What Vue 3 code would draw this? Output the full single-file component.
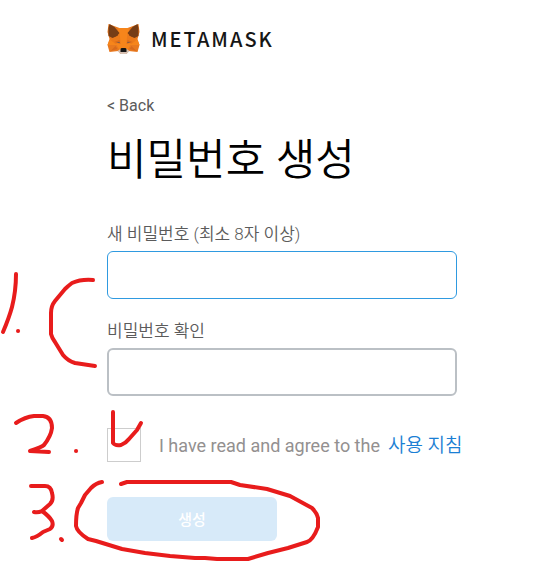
<script setup>
import { ref } from 'vue'

const password = ref('')
const confirmation = ref('')
const agreed = ref(false)

const strokes = [
  'M16 274Q16 291 12 307Q9 318 3 332',
  'M18 331h.1',
  'M93 280Q81 279 72 283Q68 286 65 289L55 301Q51 306 51 313V334Q52 338 55 342L63 355Q68 361 75 363L95 366',
  'M16 423Q25 417 34 416H43Q52 417 52 428Q51 436 44 445Q42 447 30 451L49 452',
  'M76 451h.1',
  'M113 412V443Q115 446 121 445Q126 443 129 439L137 430L141 423',
  'M31 486H45Q51 486 52 493Q54 500 50 504L42 511Q38 513 34 512M42 511Q49 516 52 521Q54 526 50 529L43 532Q37 537 32 538',
  'M61 539L62 540',
  'M102 482Q96 483 91 488L85 495L81 503L78 508Q76 514 76 526Q77 532 88 539L96 541L122 549L145 553L170 556L195 558H205L217 559H248L268 553L288 548L307 542Q313 540 318 527V518Q317 513 312 508L290 496L267 489L240 485L231 482H127L121 484'
]
</script>

<template>
  <main class="page">
    <header class="brand">
      <svg class="fox" viewBox="0 0 32 30" aria-hidden="true">
        <path fill="#e8791f" d="M1 0L12 4H20L31 0L32 8L30 15L32 21L30 28L21 27L19 30H13L11 27L2 28L0 21L2 15L0 8Z" />
        <path fill="#f6851b" d="M11 4H21L23 13L30 16L32 21H23L20 26H12L9 21H0L2 16L9 13Z" />
        <path fill="#763d16" d="M2 0L7 3L12 9L10 12L5 14L1 12L1 4ZM30 0L25 3L20 9L22 12L27 14L31 12L31 4Z" />
        <path fill="#ec7a1a" d="M12 9L13 18L8 20L3 16L10 12ZM20 9L19 18L24 20L29 16L22 12Z" />
        <path fill="#d86a1c" d="M7 18L12 16L13 20ZM25 18L20 16L19 20ZM3 27L10 25L8 22ZM29 27L22 25L24 22Z" />
        <path fill="#56585c" d="M9 18L12 18L12 19ZM23 18L20 18L20 19Z" />
        <path fill="#d7c1b3" d="M10 27L13 25H19L22 27L19 30H13Z" />
        <path fill="#161616" d="M14 24H18L19 25V28H13V25Z" />
      </svg>
      <span class="wordmark">METAMASK</span>
    </header>

    <a class="back" href="#">&lt; Back</a>
    <h1>비밀번호 생성</h1>

    <form @submit.prevent>
      <div class="field">
        <label for="password">새 비밀번호 (최소 8자 이상)</label>
        <input id="password" v-model="password" class="entry active" type="password">
      </div>
      <div class="field">
        <label for="confirmation">비밀번호 확인</label>
        <input id="confirmation" v-model="confirmation" class="entry" type="password">
      </div>
      <div class="terms">
        <input id="terms" v-model="agreed" type="checkbox">
        <p><label for="terms">I have read and agree to the</label><a href="#">사용 지침</a></p>
      </div>
      <button type="submit" disabled>생성</button>
    </form>

    <svg class="notes" width="541" height="574" viewBox="0 0 541 574" aria-hidden="true">
      <path v-for="stroke in strokes" :key="stroke" :d="stroke" />
    </svg>
  </main>
</template>

<style>
body {
  margin: 0;
  background: #fff;
}
</style>

<style scoped>
.page {
  position: relative;
  box-sizing: border-box;
  max-width: 541px;
  padding: 24px 72px 32px 107px;
  font-family: Roboto, "Noto Sans CJK KR", sans-serif;
  color: #5b5b5b;
}

.brand {
  display: flex;
  align-items: center;
  gap: 11px;
  height: 30px;
}

.fox {
  width: 33px;
  height: 30px;
}

.wordmark {
  font-family: "Noto Sans CJK KR", sans-serif;
  font-size: 20px;
  line-height: 28px;
  font-weight: 500;
  letter-spacing: 2px;
  color: #161616;
}

.back {
  display: block;
  width: max-content;
  margin-top: 40px;
  font-size: 16px;
  line-height: 24px;
  color: #5b5b5b;
  text-decoration: none;
}

h1 {
  margin: 12px 0 32px;
  font-size: 43px;
  line-height: 60px;
  font-weight: 350;
  color: #000;
  white-space: nowrap;
}

.field {
  display: flex;
  flex-direction: column;
  gap: 5px;
  max-width: 350px;
  margin-bottom: 20px;
}

.field label {
  font-size: 17px;
  line-height: 24px;
  font-weight: 350;
}

.entry {
  box-sizing: border-box;
  width: 100%;
  height: 48px;
  padding: 0 12px;
  border: 2px solid #bbc0c5;
  border-radius: 6px;
  outline: none;
  background: #fff;
  font-size: 16px;
}

.entry.active {
  border: 1px solid #2f9ae0;
}

.terms {
  display: flex;
  align-items: center;
  gap: 18px;
  margin-top: 32px;
  font-size: 18px;
  color: #939090;
  white-space: nowrap;
}

.terms p {
  display: flex;
  align-items: center;
  gap: 8px;
  margin: 0;
  padding-top: 2px;
  line-height: 32px;
}

.terms input {
  appearance: none;
  box-sizing: border-box;
  flex: none;
  width: 34px;
  height: 34px;
  margin: 0;
  border: 1px solid #cdcdcd;
  background: #fff;
}

.terms a {
  color: #1b7fd4;
  font-size: 19px;
  font-weight: 350;
  text-decoration: none;
}

button {
  display: block;
  width: 170px;
  height: 44px;
  margin-top: 35px;
  padding: 0 0 2px;
  border: 0;
  border-radius: 6px;
  background: #d7eaf9;
  color: #fff;
  font-family: inherit;
  font-size: 15px;
  font-weight: 500;
}

.notes {
  position: absolute;
  top: 0;
  left: 0;
  pointer-events: none;
}

.notes path {
  fill: none;
  stroke: #e81c1c;
  stroke-width: 4;
  stroke-linecap: round;
  stroke-linejoin: round;
}
</style>
